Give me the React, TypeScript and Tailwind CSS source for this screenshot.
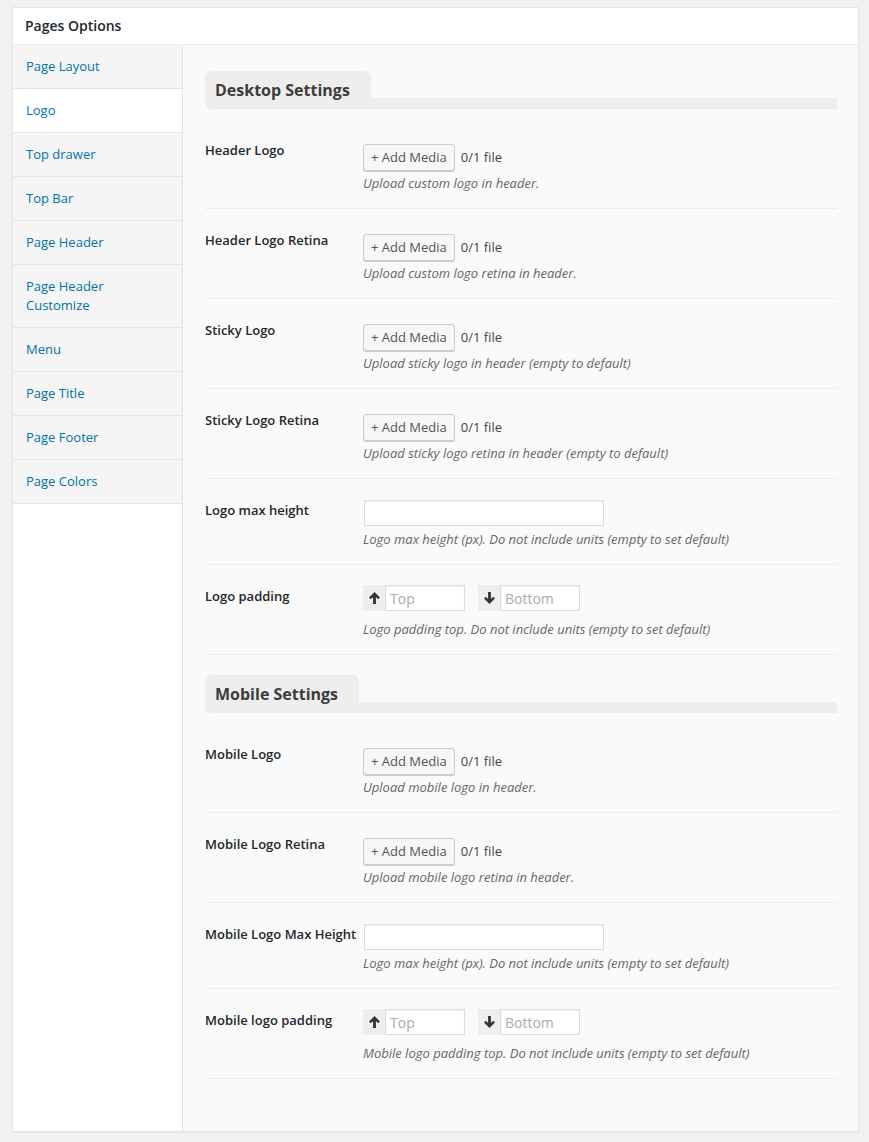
import React from "react";

const tabs = [
  "Page Layout",
  "Logo",
  "Top drawer",
  "Top Bar",
  "Page Header",
  "Page Header Customize",
  "Menu",
  "Page Title",
  "Page Footer",
  "Page Colors",
];

function Arrow({ down }: { down?: boolean }) {
  return (
    <svg
      width="11"
      height="12"
      viewBox="0 0 10 11"
      className={down ? "rotate-180" : ""}
    >
      <path
        d="M5 0 L10 5 L8.4 6.6 L6.3 4.5 V11 H3.7 V4.5 L1.6 6.6 L0 5 Z"
        fill="#333"
      />
    </svg>
  );
}

function Heading({ title, first }: { title: string; first?: boolean }) {
  return (
    <div className={`flex mb-[10px] ${first ? "" : "mt-[20px]"}`}>
      <div className="h-[38px] bg-[#eee] rounded-t-[6px] rounded-bl-[6px] pl-[10px] pr-[21px] text-[16px] font-bold leading-[38px] text-[#3c3c3c]">
        {title}
      </div>
      <div className="flex-1 self-end h-[11px] bg-[#eee]" />
    </div>
  );
}

function Row({ label, children }: { label: string; children: React.ReactNode }) {
  return (
    <div className="flex border-b border-[#eee] pt-[20px] pb-[16px]">
      <div className="w-[158px] shrink-0 mt-[1px] text-[13px] font-semibold leading-[20px] text-[#23282d]">
        {label}
      </div>
      <div className="flex-1">{children}</div>
    </div>
  );
}

function Desc({ text, mt }: { text: string; mt: string }) {
  return (
    <p className={`${mt} text-[13px] italic leading-[18px] text-[#666]`}>{text}</p>
  );
}

function Media({ desc }: { desc: string }) {
  return (
    <>
      <div className="mt-[5px] flex items-center gap-[6px]">
        <button className="h-[27px] rounded-[3px] border border-[#ccc] bg-[#f7f7f7] px-[7px] text-[13px] text-[#555] shadow-[0_1px_0_#ccc]">
          + Add Media
        </button>
        <span className="text-[13px] text-[#444]">0/1 file</span>
      </div>
      <Desc text={desc} mt="mt-[3px]" />
    </>
  );
}

function MaxHeight() {
  return (
    <>
      <input className="mt-[1px] ml-[1px] block h-[26px] w-[240px] border border-[#ddd] bg-white shadow-[inset_0_1px_2px_rgba(0,0,0,0.07)] outline-none" />
      <Desc
        text="Logo max height (px). Do not include units (empty to set default)"
        mt="mt-[4px]"
      />
    </>
  );
}

function Padding({ desc }: { desc: string }) {
  const group = (ph: string, down?: boolean) => (
    <div className="flex h-[26px]">
      <div className="flex w-[22px] items-center justify-center bg-[#eee]">
        <Arrow down={down} />
      </div>
      <input
        placeholder={ph}
        className="h-[26px] w-[80px] border border-[#ddd] bg-white px-[4px] text-[14px] text-[#333] placeholder:text-[#aaa] shadow-[inset_0_1px_2px_rgba(0,0,0,0.07)] outline-none"
      />
    </div>
  );
  return (
    <>
      <div className="flex gap-[13px]">
        {group("Top")}
        {group("Bottom", true)}
      </div>
      <Desc text={desc} mt="mt-[9px]" />
    </>
  );
}

export default function App() {
  return (
    <div
      className="min-h-[1142px] bg-[#f1f1f1] pt-[7px] pl-[12px]"
      style={{ fontFamily: '"Open Sans", sans-serif' }}
    >
      <div className="w-[847px] border border-[#e5e5e5] bg-white shadow-[0_1px_1px_rgba(0,0,0,0.04)]">
        <h2 className="h-[37px] border-b border-[#eee] px-[12px] text-[14px] font-semibold leading-[36px] text-[#23282d]">
          Pages Options
        </h2>
        <div className="flex">
          {/* Side tabs */}
          <ul className="w-[170px] shrink-0 border-r border-[#e5e5e5] bg-white">
            {tabs.map((t) => (
              <li
                key={t}
                className={`border-b border-[#e5e5e5] px-[13px] py-[12px] text-[13px] leading-[19px] text-[#0073aa] ${
                  t === "Logo" ? "bg-white" : "bg-[#f5f5f5]"
                }`}
              >
                {t === "Page Header Customize" ? (
                  <>
                    Page Header
                    <br />
                    Customize
                  </>
                ) : (
                  t
                )}
              </li>
            ))}
          </ul>

          {/* Content */}
          <div className="flex-1 bg-[#fafafa] pl-[22px] pr-[21px] pt-[26px] pb-[52px]">
            <Heading title="Desktop Settings" first />
            <Row label="Header Logo">
              <Media desc="Upload custom logo in header." />
            </Row>
            <Row label="Header Logo Retina">
              <Media desc="Upload custom logo retina in header." />
            </Row>
            <Row label="Sticky Logo">
              <Media desc="Upload sticky logo in header (empty to default)" />
            </Row>
            <Row label="Sticky Logo Retina">
              <Media desc="Upload sticky logo retina in header (empty to default)" />
            </Row>
            <Row label="Logo max height">
              <MaxHeight />
            </Row>
            <Row label="Logo padding">
              <Padding desc="Logo padding top. Do not include units (empty to set default)" />
            </Row>

            <Heading title="Mobile Settings" />
            <Row label="Mobile Logo">
              <Media desc="Upload mobile logo in header." />
            </Row>
            <Row label="Mobile Logo Retina">
              <Media desc="Upload mobile logo retina in header." />
            </Row>
            <Row label="Mobile Logo Max Height">
              <MaxHeight />
            </Row>
            <Row label="Mobile logo padding">
              <Padding desc="Mobile logo padding top. Do not include units (empty to set default)" />
            </Row>
          </div>
        </div>
      </div>
    </div>
  );
}
